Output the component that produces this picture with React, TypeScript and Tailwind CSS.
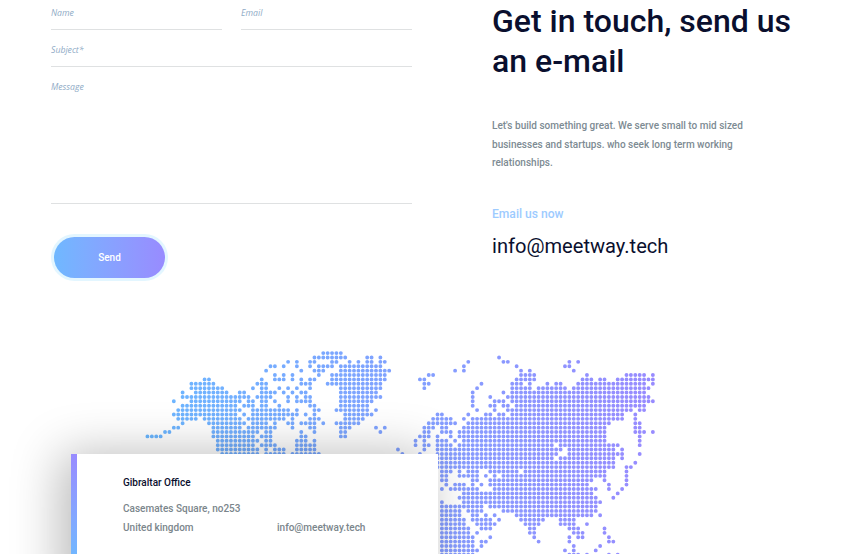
import React from "react";

// Dot columns that are filled in every row of the world map, top to bottom.
const ROWS: string[] = [
  "40-44",
  "38-45 50-51 53 80",
  "32 34 37-38 42-43 46 48 50-51 53-54 73 81-82 96 98",
  "28-29 31 34 37 39-42 44-53 72 84 95-96",
  "27 35 38-40 44-55 70 72 85 87 97",
  "29 31 33 39 42-54 64-65 85-88 100 109-113 115",
  "13-14 26 29-31 33 35 37-38 42-54 62-63 84-88 99-101 103-104 107-115",
  "10-15 25-27 35-37 41-53 63-64 76 83-85 87 91 93-94 98-113 115",
  "10-17 24 26-27 30 32 34 37 44-53 63 75 83-87 89-95 97-114",
  "8 11-18 21-22 26-29 31 33 35-36 44-52 74 81 83-113",
  "8-10 11-23 25-28 32 34 36-37 44-53 74 78 82-114",
  "6 10-21 23-24 26-27 29 32 34-37 44-51 74 79-81 83-115",
  "8-20 22-24 26-27 30 37-38 44-50 74 78-79 81-82 84-113",
  "7-21 24-32 34 38-39 43-50 52 75 79 82-110 112-113",
  "6-20 22 24-34 36 38 45-51 66-67 73 77-78 80-81 83-108 111",
  "7-11 13-21 23-31 33 37-39 45-49 65-69 72 74-108 111",
  "8 14-22 24-27 29 32-33 35-38 40 43-48 64-70 73-105 111-112",
  "6-7 15-21 23-29 33 37-38 44-46 52 54 63-65 67-68 72-104 111-112",
  "4-5 15-25 27-28 35 38 44-45 53 63-64 67-69 71-104 111-113 115",
  "0-3 15-24 26-28 35-36 44-45 62-64 66 69 71-104 112",
  "16-25 27-28 34-36 38 61 63 66-68 70 72-104 112",
  "16-24 26-29 34-38 61 63-64 66-69 71-92 94-107 112",
  "16-25 27 29-31 34-38 57 63 66-94 96-106 108",
  "17-25 27-31 33-38 39 58 62 66-93 96-108 112",
  "66-92 94-106 108",
  "66-106 111",
  "66-106 109-110",
  "67-69 71 73-75 78-84 86-104 109",
  "67-68 71-75 77 79 81-104 109",
  "67-68 74-75 78-101 104 109",
  "68 70-72 74 76 78-100 105 109",
  "67 69-75 79-102 105 108",
  "72-101 107",
  "71-102 106",
  "67 72-103",
  "67-76 78-102",
  "67-71 73-76 81-102",
  "67-71 74-75 77 79 84-101 103",
  "67-72 74-78 80 85-90 94-97",
  "67-72 75-79 86-89 94-97 100",
  "67-73 76-78 87-88 96-98 104",
  "67-73 75 87-88 97-99 104",
  "67-74 78 88 96 98-99 105",
  "67-74 76-77 89 96 105-106",
  "67-74 76 97 103",
  "67-75 95 97 102",
  "67-74 96-98 100 105 107",
];

const dots = ROWS.flatMap((row, r) =>
  row.split(" ").flatMap((part) => {
    const [a, b = a] = part.split("-").map(Number);
    return Array.from({ length: b - a + 1 }, (_, i) => ({ c: a + i, r }));
  })
);

function WorldMap() {
  return (
    <svg className="block h-[209px] w-full" viewBox="0 345 866 209">
      <defs>
        <linearGradient id="map" gradientUnits="userSpaceOnUse" x1="147" y1="0" x2="655" y2="0">
          <stop offset="0" stopColor="#6bb7ff" />
          <stop offset="1" stopColor="#988bff" />
        </linearGradient>
      </defs>
      <g fill="url(#map)">
        <path
          d={dots
            .map(({ c, r }) => `M${(145.5 + c * 4.395).toFixed(2)} ${(353.1 + r * 4.384).toFixed(2)}a1.95 1.95 0 1 0 3.9 0a1.95 1.95 0 1 0 -3.9 0`)
            .join("")}
        />
      </g>
    </svg>
  );
}

const field =
  "block w-full border-b border-[#dfe1e2] bg-transparent font-['Open_Sans',sans-serif] text-[8.7px] italic text-[#6f8faf] placeholder:text-[#8fabc6] placeholder:opacity-100 outline-none";

function ContactForm() {
  return (
    <form className="w-[361px]">
      <div className="flex gap-[19px]">
        <input className={`${field} h-[30px] pb-[3px]`} placeholder="Name" />
        <input className={`${field} h-[30px] pb-[3px]`} placeholder="Email" />
      </div>
      <input className={`${field} h-[37px] pt-[3px]`} placeholder="Subject*" />
      <textarea className={`${field} h-[137px] resize-none pt-[13px] leading-[14px]`} placeholder="Message" />
      <button
        type="button"
        className="mt-[30px] h-[47px] w-[117px] rounded-full bg-[#e3f6ff] p-[3px]"
      >
        <span className="flex h-full items-center justify-center rounded-full bg-linear-to-r from-[#6fb8ff] to-[#988bff] text-[10px] font-medium text-white">
          Send
        </span>
      </button>
    </form>
  );
}

export default function App() {
  return (
    <div className="relative h-[554px] w-[866px] overflow-hidden bg-white font-[Roboto,sans-serif]">
      <div className="flex h-[345px] gap-[80px] pl-[51px]">
        <ContactForm />
        <div className="w-[320px] pt-[2px]">
          <h1 className="text-[32px] leading-[39.5px] font-medium whitespace-nowrap text-[#0a0f2e]">
            Get in touch, send us
            <br />
            an e-mail
          </h1>
          <p className="mt-[36px] text-[10.03px] leading-[18.7px] font-medium whitespace-nowrap text-[#7d8b93]">
            Let's build something great. We serve small to mid sized
            <br />
            businesses and startups. who seek long term working
            <br />
            relationships.
          </p>
          <p className="mt-[32px] text-[12.1px] leading-[18px] font-medium text-[#9dcbff]">Email us now</p>
          <p className="mt-[10px] text-[20.1px] leading-[26px] font-normal text-[#0a0f2e]">info@meetway.tech</p>
        </div>
      </div>
      <WorldMap />
      <section className="absolute top-[454px] left-[71px] flex h-[150px] w-[367px] bg-white shadow-[-10px_0_50px_rgba(0,0,0,0.28)]">
        <div className="w-[6px] bg-linear-to-b from-[#988bff] to-[#6fb8ff] to-[105px]" />
        <div className="pt-[19px] pl-[46px] text-[10.03px] leading-[19px] font-medium text-[#7b868c]">
          <h2 className="mb-[7px] text-[#0a0f2e]">Gibraltar Office</h2>
          <div className="flex items-end">
            <p className="w-[154px]">
              Casemates Square, no253
              <br />
              United kingdom
            </p>
            <p>info@meetway.tech</p>
          </div>
        </div>
      </section>
    </div>
  );
}
